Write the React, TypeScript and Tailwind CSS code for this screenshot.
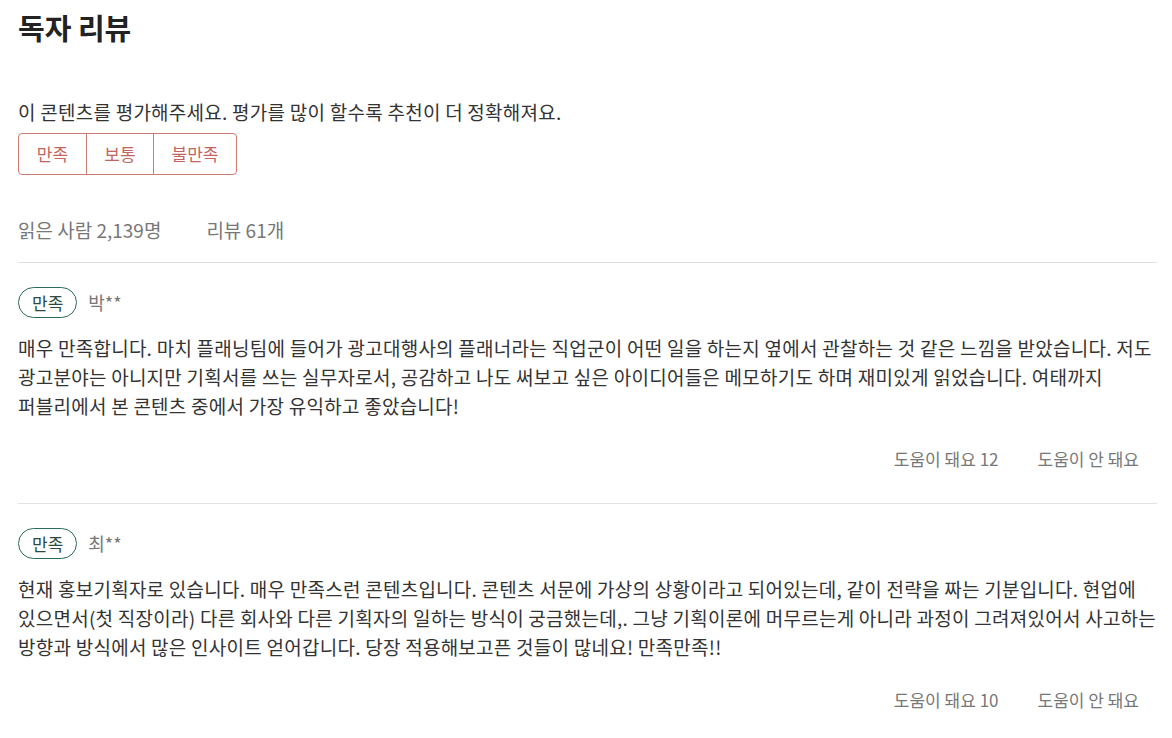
import React from "react";

const font = { fontFamily: '"Noto Sans CJK KR", "Noto Sans", sans-serif' };

type Review = { name: string; lines: string[]; helpful: number };

const reviews: Review[] = [
  {
    name: "박**",
    lines: [
      "매우 만족합니다. 마치 플래닝팀에 들어가 광고대행사의 플래너라는 직업군이 어떤 일을 하는지 옆에서 관찰하는 것 같은 느낌을 받았습니다. 저도",
      "광고분야는 아니지만 기획서를 쓰는 실무자로서, 공감하고 나도 써보고 싶은 아이디어들은 메모하기도 하며 재미있게 읽었습니다. 여태까지",
      "퍼블리에서 본 콘텐츠 중에서 가장 유익하고 좋았습니다!",
    ],
    helpful: 12,
  },
  {
    name: "최**",
    lines: [
      "현재 홍보기획자로 있습니다. 매우 만족스런 콘텐츠입니다. 콘텐츠 서문에 가상의 상황이라고 되어있는데, 같이 전략을 짜는 기분입니다. 현업에",
      "있으면서(첫 직장이라) 다른 회사와 다른 기획자의 일하는 방식이 궁금했는데,. 그냥 기획이론에 머무르는게 아니라 과정이 그려져있어서 사고하는",
      "방향과 방식에서 많은 인사이트 얻어갑니다. 당장 적용해보고픈 것들이 많네요! 만족만족!!",
    ],
    helpful: 10,
  },
];

function ReviewItem({ r }: { r: Review }) {
  return (
    <div className="border-t border-[#e2e2e2]">
      <div className="mt-[24px] flex items-center gap-[11px]">
        <span className="h-[31px] px-[13px] flex items-center rounded-full border border-[#2b6a5b] text-[17px] text-[#2b4a42]">
          만족
        </span>
        <span className="text-[18px] text-[#777]">{r.name}</span>
      </div>
      <div className="mt-[15px] text-[19px] tracking-[0.25px] leading-[29px] text-[#333]">
        {r.lines.map((l, i) => (
          <div key={i} className="whitespace-nowrap">
            {l}
          </div>
        ))}
      </div>
      <div className="mt-[27px] mb-[32px] pr-[18px] flex justify-end gap-[39px] text-[17px] leading-[24px] text-[#777]">
        <span>도움이 돼요 {r.helpful}</span>
        <span>도움이 안 돼요</span>
      </div>
    </div>
  );
}

export default function App() {
  return (
    <div className="w-[1172px] min-h-[738px] bg-white pl-[18px] pr-[15px] pt-[9px]" style={font}>
      <h1 className="text-[29px] leading-[36px] font-bold text-[#222]">독자 리뷰</h1>
      <p className="mt-[52px] text-[19px] tracking-[0.25px] leading-[29px] text-[#333]">
        이 콘텐츠를 평가해주세요. 평가를 많이 할수록 추천이 더 정확해져요.
      </p>
      <div className="mt-[7px] inline-flex h-[42px] rounded-[4px] border border-[#cd7b73] text-[17px] text-[#c4645c]">
        <button className="w-[68px] border-r border-[#cd7b73]">만족</button>
        <button className="w-[67px] border-r border-[#cd7b73]">보통</button>
        <button className="w-[82px]">불만족</button>
      </div>
      <div className="mt-[40px] mb-[18px] flex gap-[45px] text-[19px] leading-[29px] text-[#777]">
        <span>읽은 사람 2,139명</span>
        <span>리뷰 61개</span>
      </div>
      {reviews.map((r, i) => (
        <ReviewItem key={i} r={r} />
      ))}
    </div>
  );
}
